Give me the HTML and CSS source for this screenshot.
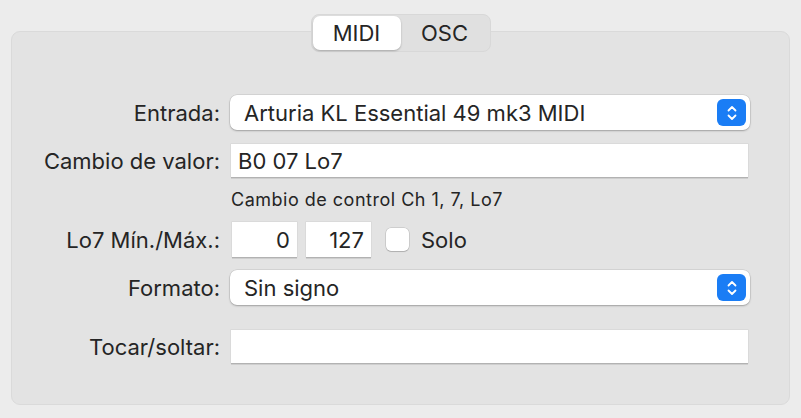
FILE: index.html
```html
<!DOCTYPE html>
<html lang="es">
<head>
  <meta charset="UTF-8">
  <title>Asignación MIDI</title>
  <link rel="stylesheet" href="styles.css">
</head>
<body>

  <!-- Tabs -->
  <div class="tabs">
    <div class="segmented">
      <span class="segment active">MIDI</span>
      <span class="segment">OSC</span>
    </div>
  </div>

  <!-- Settings panel -->
  <section class="panel">
    <div class="row row-entrada">
      <label class="label">Entrada:</label>
      <div class="popup">
        <span class="popup-text">Arturia KL Essential 49 mk3 MIDI</span>
        <span class="stepper">
          <svg width="12" height="18" viewBox="0 0 12 18">
            <path d="M2.5 6.5 L6 3 L9.5 6.5 M2.5 11.5 L6 15 L9.5 11.5" fill="none" stroke="#fff" stroke-width="1.8" stroke-linecap="round" stroke-linejoin="round"/>
          </svg>
        </span>
      </div>
    </div>

    <div class="row row-valor">
      <label class="label">Cambio de valor:</label>
      <div class="field">B0 07 Lo7</div>
    </div>

    <p class="hint">Cambio de control Ch 1, 7, Lo7</p>

    <div class="row row-minmax">
      <label class="label">Lo7 Mín./Máx.:</label>
      <div class="minmax">
        <div class="field small">0</div>
        <div class="field small">127</div>
        <span class="checkbox"></span>
        <span class="check-label">Solo</span>
      </div>
    </div>

    <div class="row row-formato">
      <label class="label">Formato:</label>
      <div class="popup">
        <span class="popup-text">Sin signo</span>
        <span class="stepper">
          <svg width="12" height="18" viewBox="0 0 12 18">
            <path d="M2.5 6.5 L6 3 L9.5 6.5 M2.5 11.5 L6 15 L9.5 11.5" fill="none" stroke="#fff" stroke-width="1.8" stroke-linecap="round" stroke-linejoin="round"/>
          </svg>
        </span>
      </div>
    </div>

    <div class="row row-tocar">
      <label class="label">Tocar/soltar:</label>
      <div class="field"></div>
    </div>
  </section>

</body>
</html>
```

FILE: styles.css
```css
* {
  box-sizing: border-box;
  margin: 0;
  padding: 0;
}

body {
  font-family: Inter, Roboto, "Liberation Sans", sans-serif;
  font-size: 22px;
  background-color: #ececec;
  color: #252525;
  width: 801px;
  height: 418px;
  overflow: hidden;
}

/* Segmented control on top of the panel */
.tabs {
  display: flex;
  justify-content: center;
  padding-top: 14px;
  margin-bottom: -21px;
  position: relative;
  z-index: 1;
}

.segmented {
  display: flex;
  width: 180px;
  height: 38px;
  padding: 1px;
  background-color: #e0e0e0;
  border: 1px solid #d8d8d8;
  border-radius: 8px;
}

.segment {
  flex: 1;
  display: flex;
  align-items: center;
  justify-content: center;
  border-radius: 7px;
  padding-bottom: 1px;
}

.segment.active {
  background-color: #fff;
  box-shadow: 0 1px 2px rgba(0, 0, 0, 0.25);
}

/* Panel */
.panel {
  margin: 0 11px;
  height: 374px;
  background-color: #e3e3e3;
  border: 1px solid #dadada;
  border-radius: 9px;
  padding: 63px 40px 0 0;
}

.row {
  display: flex;
  align-items: center;
}

.label {
  width: 209px;
  text-align: right;
  padding-right: 1px;
  flex-shrink: 0;
}

.popup {
  flex: 1;
  height: 35px;
  margin-left: 9px;
  margin-right: -1px;
  display: flex;
  align-items: center;
  justify-content: space-between;
  background-color: #fff;
  border-radius: 7px;
  box-shadow: 0 0 0 0.5px rgba(0, 0, 0, 0.12), 0 1px 2px rgba(0, 0, 0, 0.25);
  padding: 0 4px 0 14px;
}

.stepper {
  width: 29px;
  height: 27px;
  border-radius: 6px;
  background-color: #1a7df5;
  display: flex;
  align-items: center;
  justify-content: center;
}

.field {
  flex: 1;
  height: 33px;
  margin-left: 10px;
  margin-right: 1px;
  background-color: #fff;
  box-shadow: 0 0 0 0.5px rgba(0, 0, 0, 0.08), 0 1.5px 0 rgba(0, 0, 0, 0.18);
  padding: 0 7px;
  display: flex;
  align-items: center;
}

.row-valor {
  margin-top: 14px;
}

.hint {
  font-size: 18px;
  letter-spacing: 0.5px;
  margin: 12px 0 0 219px;
  height: 20px;
}

.row-minmax {
  margin-top: 13px;
}

.minmax {
  display: flex;
  align-items: center;
  margin-left: 11px;
}

.field.small {
  flex: none;
  width: 65px;
  height: 35px;
  margin: 0 9px 0 0;
  justify-content: flex-end;
}

.checkbox {
  width: 23px;
  height: 23px;
  margin-left: 6px;
  background-color: #fff;
  border-radius: 5px;
  box-shadow: 0 0 0 0.5px rgba(0, 0, 0, 0.18), 0 1px 1px rgba(0, 0, 0, 0.15);
}

.check-label {
  margin-left: 12px;
}

.row-formato {
  margin-top: 13px;
}

.row-tocar {
  margin-top: 25px;
}
```
